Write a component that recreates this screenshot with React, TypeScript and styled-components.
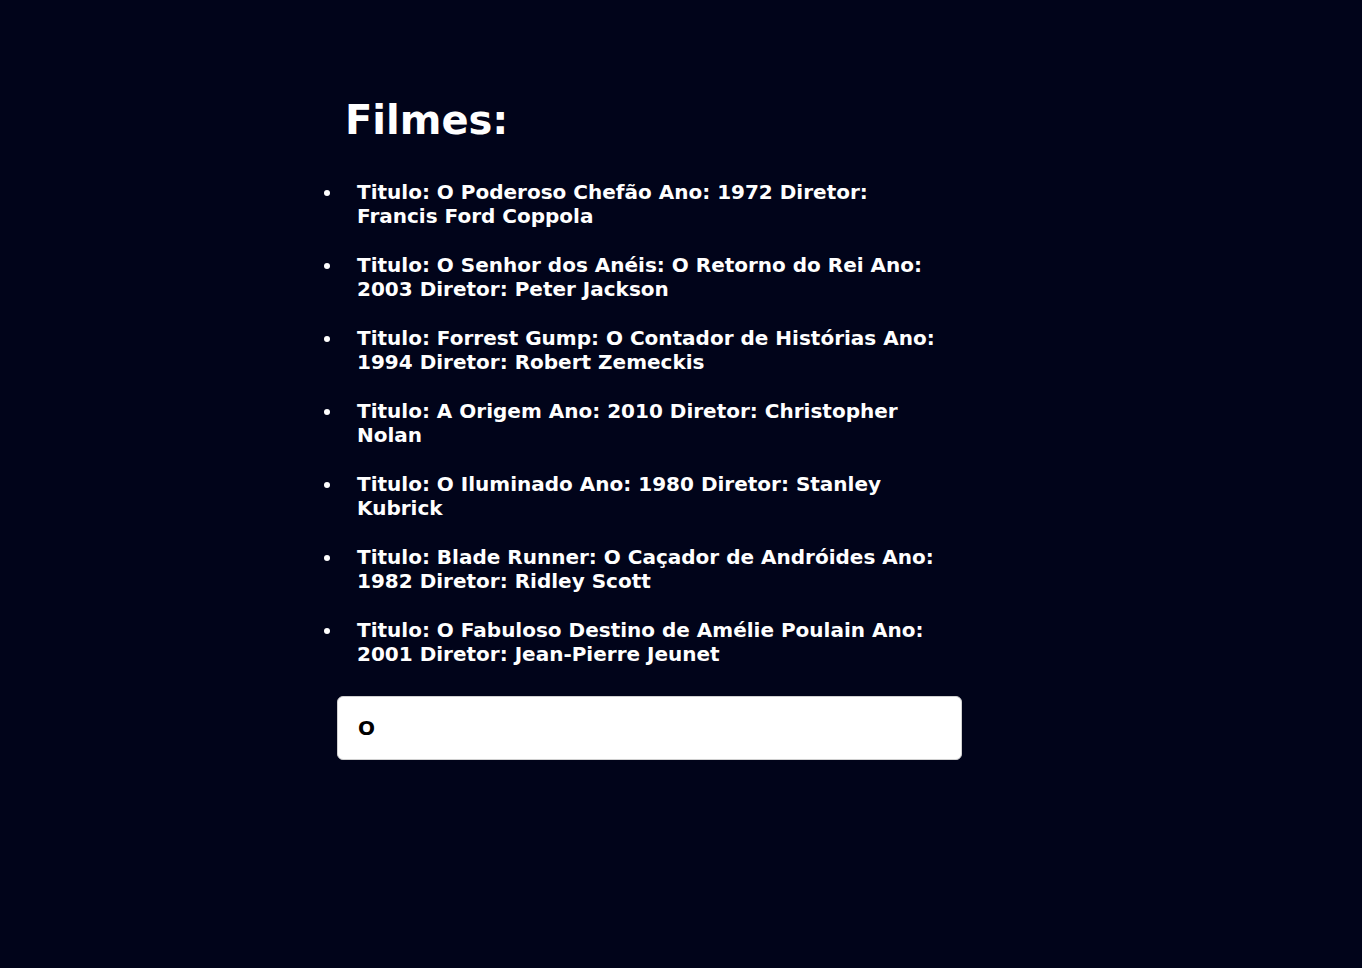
import React from "react";
import styled, { createGlobalStyle } from "styled-components";

const Global = createGlobalStyle`
  html, body {
    margin: 0;
    padding: 0;
    background: #01041a;
    min-height: 100%;
  }
  body {
    font-family: Verdana, "DejaVu Sans", sans-serif;
    color: #ffffff;
  }
`;

const Page = styled.main`
  min-height: 968px;
  display: flex;
  justify-content: center;
  padding-top: 96px;
  box-sizing: border-box;
`;

const Column = styled.section`
  width: 625px;
  margin-left: -63px;
  display: flex;
  flex-direction: column;
`;

const Title = styled.h1`
  margin: 0 0 36px 8px;
  font-size: 40px;
  font-weight: bold;
  line-height: 48px;
`;

const List = styled.ul`
  margin: 0;
  padding: 0 20px 0 6px;
  display: flex;
  flex-direction: column;
  gap: 25px;
`;

const Item = styled.li`
  padding-left: 14px;
  font-size: 20px;
  font-weight: bold;
  line-height: 24px;
`;

const Search = styled.input`
  margin-top: 30px;
  height: 64px;
  box-sizing: border-box;
  border: 1px solid #d0d0d0;
  border-radius: 6px;
  background: #ffffff;
  padding: 0 20px;
  font-family: Verdana, "DejaVu Sans", sans-serif;
  font-size: 20px;
  font-weight: bold;
  color: #000000;
  outline: none;
`;

const filmes = [
  { titulo: "O Poderoso Chefão", ano: 1972, diretor: "Francis Ford Coppola" },
  { titulo: "O Senhor dos Anéis: O Retorno do Rei", ano: 2003, diretor: "Peter Jackson" },
  { titulo: "Forrest Gump: O Contador de Histórias", ano: 1994, diretor: "Robert Zemeckis" },
  { titulo: "A Origem", ano: 2010, diretor: "Christopher Nolan" },
  { titulo: "O Iluminado", ano: 1980, diretor: "Stanley Kubrick" },
  { titulo: "Blade Runner: O Caçador de Andróides", ano: 1982, diretor: "Ridley Scott" },
  { titulo: "O Fabuloso Destino de Amélie Poulain", ano: 2001, diretor: "Jean-Pierre Jeunet" },
];

export default function App() {
  return (
    <>
      <Global />
      <Page>
        <Column>
          <Title>Filmes:</Title>
          <List>
            {filmes.map((f) => (
              <Item key={f.titulo}>
                Titulo: {f.titulo} Ano: {f.ano} Diretor: {f.diretor}
              </Item>
            ))}
          </List>
          <Search defaultValue="O" />
        </Column>
      </Page>
    </>
  );
}
